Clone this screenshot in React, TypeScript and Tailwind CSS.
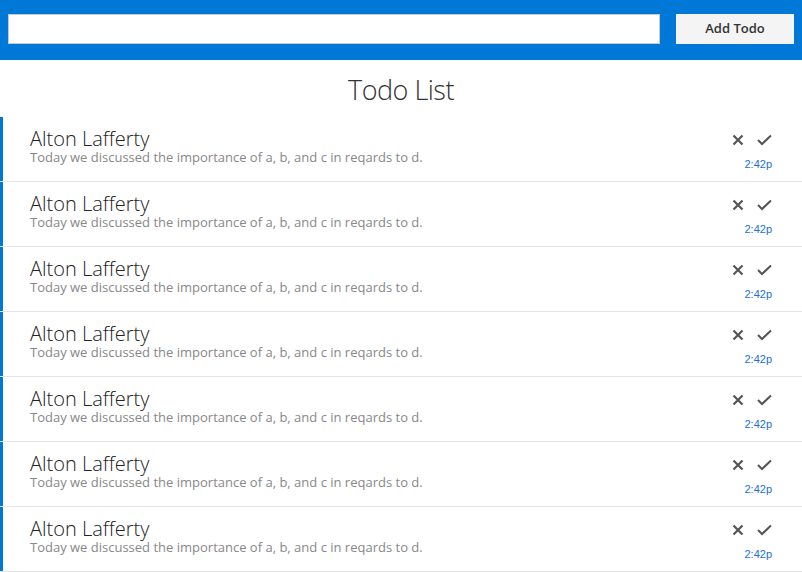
import { useState } from 'react';

type Todo = { id: number; name: string; note: string; time: string };

const TODOS: Todo[] = Array.from({ length: 7 }, (_, i) => ({
  id: i,
  name: 'Alton Lafferty',
  note: 'Today we discussed the importance of a, b, and c in reqards to d.',
  time: '2:42p',
}));

function XIcon() {
  return (
    <svg width="12" height="12" viewBox="0 0 12 12" className="block">
      <path d="M1.5 1.5 L10.5 10.5 M10.5 1.5 L1.5 10.5" stroke="#555" strokeWidth="2.2" strokeLinecap="butt" />
    </svg>
  );
}

function CheckIcon() {
  return (
    <svg width="15" height="12" viewBox="0 0 15 12" className="block">
      <path d="M1 6 L5 10 L14 1.5" stroke="#555" strokeWidth="2" fill="none" />
    </svg>
  );
}

export default function App() {
  const [text, setText] = useState('');

  return (
    <div className="w-[802px] h-[572px] overflow-hidden bg-white" style={{ fontFamily: '"Open Sans", sans-serif' }}>
      {/* Header */}
      <div className="h-[60px] bg-[#0078d7] flex items-start pt-[14px] pl-[8px] pr-[8px] gap-4">
        <input
          value={text}
          onChange={(e) => setText(e.target.value)}
          className="w-[652px] h-[30px] bg-white border border-[#c8c8c8] outline-none px-2 text-sm"
        />
        <button className="w-[118px] h-[30px] bg-[#f4f4f4] text-[13px] font-semibold text-[#333]">
          Add Todo
        </button>
      </div>

      <h1 className="text-center text-[27px] font-light text-[#333] leading-[27px] pt-[16px] pb-[14px] tracking-[-0.5px]">
        Todo List
      </h1>

      <ul className="m-0 p-0 list-none">
        {TODOS.map((t) => (
          <li key={t.id} className="h-[65px] border-b border-[#e6e6e6]">
            <div className="h-[64px] border-l-[3px] border-[#0078d7] flex justify-between pl-[27px] pr-[30px]">
              <div className="pt-[12px]">
                <div className="text-[20px] font-light text-[#222] leading-[20px]">{t.name}</div>
                <div className="text-[13px] text-[#888] leading-[16px]">{t.note}</div>
              </div>
              <div className="pt-[17px] flex flex-col items-end">
                <div className="flex items-center gap-[13px]">
                  <button className="p-0"><XIcon /></button>
                  <button className="p-0"><CheckIcon /></button>
                </div>
                <div className="text-[11px] text-[#1a6fd8] mt-[13px] leading-none" style={{ fontFamily: '"Liberation Sans", sans-serif' }}>
                  {t.time}
                </div>
              </div>
            </div>
          </li>
        ))}
      </ul>
    </div>
  );
}
